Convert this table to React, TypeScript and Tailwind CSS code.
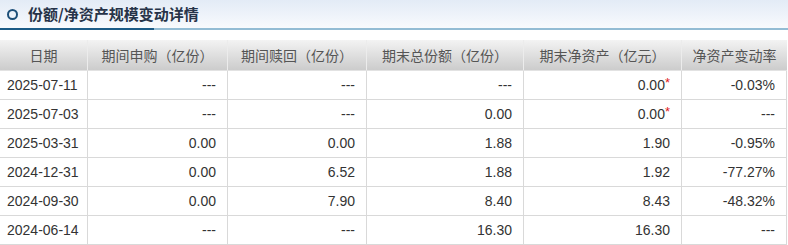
const cols = "grid grid-cols-[88px_140px_139px_157px_158px_1fr]";

const headers = ["日期", "期间申购（亿份）", "期间赎回（亿份）", "期末总份额（亿份）", "期末净资产（亿元）", "净资产变动率"];

type Row = { date: string; buy: string; sell: string; total: string; nav: string; star?: boolean; rate: string };

const rows: Row[] = [
  { date: "2025-07-11", buy: "---", sell: "---", total: "---", nav: "0.00", star: true, rate: "-0.03%" },
  { date: "2025-07-03", buy: "---", sell: "---", total: "0.00", nav: "0.00", star: true, rate: "---" },
  { date: "2025-03-31", buy: "0.00", sell: "0.00", total: "1.88", nav: "1.90", rate: "-0.95%" },
  { date: "2024-12-31", buy: "0.00", sell: "6.52", total: "1.88", nav: "1.92", rate: "-77.27%" },
  { date: "2024-09-30", buy: "0.00", sell: "7.90", total: "8.40", nav: "8.43", rate: "-48.32%" },
  { date: "2024-06-14", buy: "---", sell: "---", total: "16.30", nav: "16.30", rate: "---" },
];

function Cell({ children, first = false }: { children: React.ReactNode; first?: boolean }) {
  return (
    <div
      className={`flex items-center h-[29px] border-b border-r border-[#d9d9d9] ${
        first ? "justify-start pl-[7px]" : "justify-end pr-[11px]"
      }`}
    >
      {children}
    </div>
  );
}

export default function App() {
  return (
    <div className="w-[788px] h-[245px] overflow-hidden bg-white">
      <div className="h-[28px] flex items-center bg-gradient-to-b from-[#e3ebf6] to-[#f8fafd]">
        <span className="ml-[7px] w-[11px] h-[11px] rounded-full border-[2.5px] border-[#1d4f78]" />
        <span
          className="ml-[10px] text-[15px] font-bold text-[#263348]"
          style={{ fontFamily: '"Noto Sans CJK SC", sans-serif' }}
        >
          份额/净资产规模变动详情
        </span>
      </div>
      <div className="flex h-[2px]">
        <div className="w-[154px] bg-[#1c5b86]" />
        <div className="flex-1 bg-[#93bcd4]" />
      </div>

      <div className="mt-[10px] w-[787px]" style={{ fontFamily: '"Liberation Sans", Arial, sans-serif' }}>
        <div className={`${cols} h-[31px] bg-gradient-to-b from-[#f3f3f3] to-[#cccccc] border-b border-[#e2e2e2]`}>
          {headers.map((h, i) => (
            <div
              key={h}
              className={`flex items-center justify-center text-[14px] text-[#555] ${i < headers.length - 1 ? "border-r border-[#ececec]" : ""}`}
              style={{ fontFamily: '"Noto Sans CJK SC", sans-serif' }}
            >
              {h}
            </div>
          ))}
        </div>
        {rows.map((r) => (
          <div key={r.date} className={`${cols} text-[14px] text-[#333]`}>
            <Cell first>{r.date}</Cell>
            <Cell>{r.buy}</Cell>
            <Cell>{r.sell}</Cell>
            <Cell>{r.total}</Cell>
            <Cell>
              {r.nav}
              {r.star && <span className="relative -top-[3px] text-[13px] leading-none text-[#e02020]">*</span>}
            </Cell>
            <Cell>{r.rate}</Cell>
          </div>
        ))}
      </div>
    </div>
  );
}
